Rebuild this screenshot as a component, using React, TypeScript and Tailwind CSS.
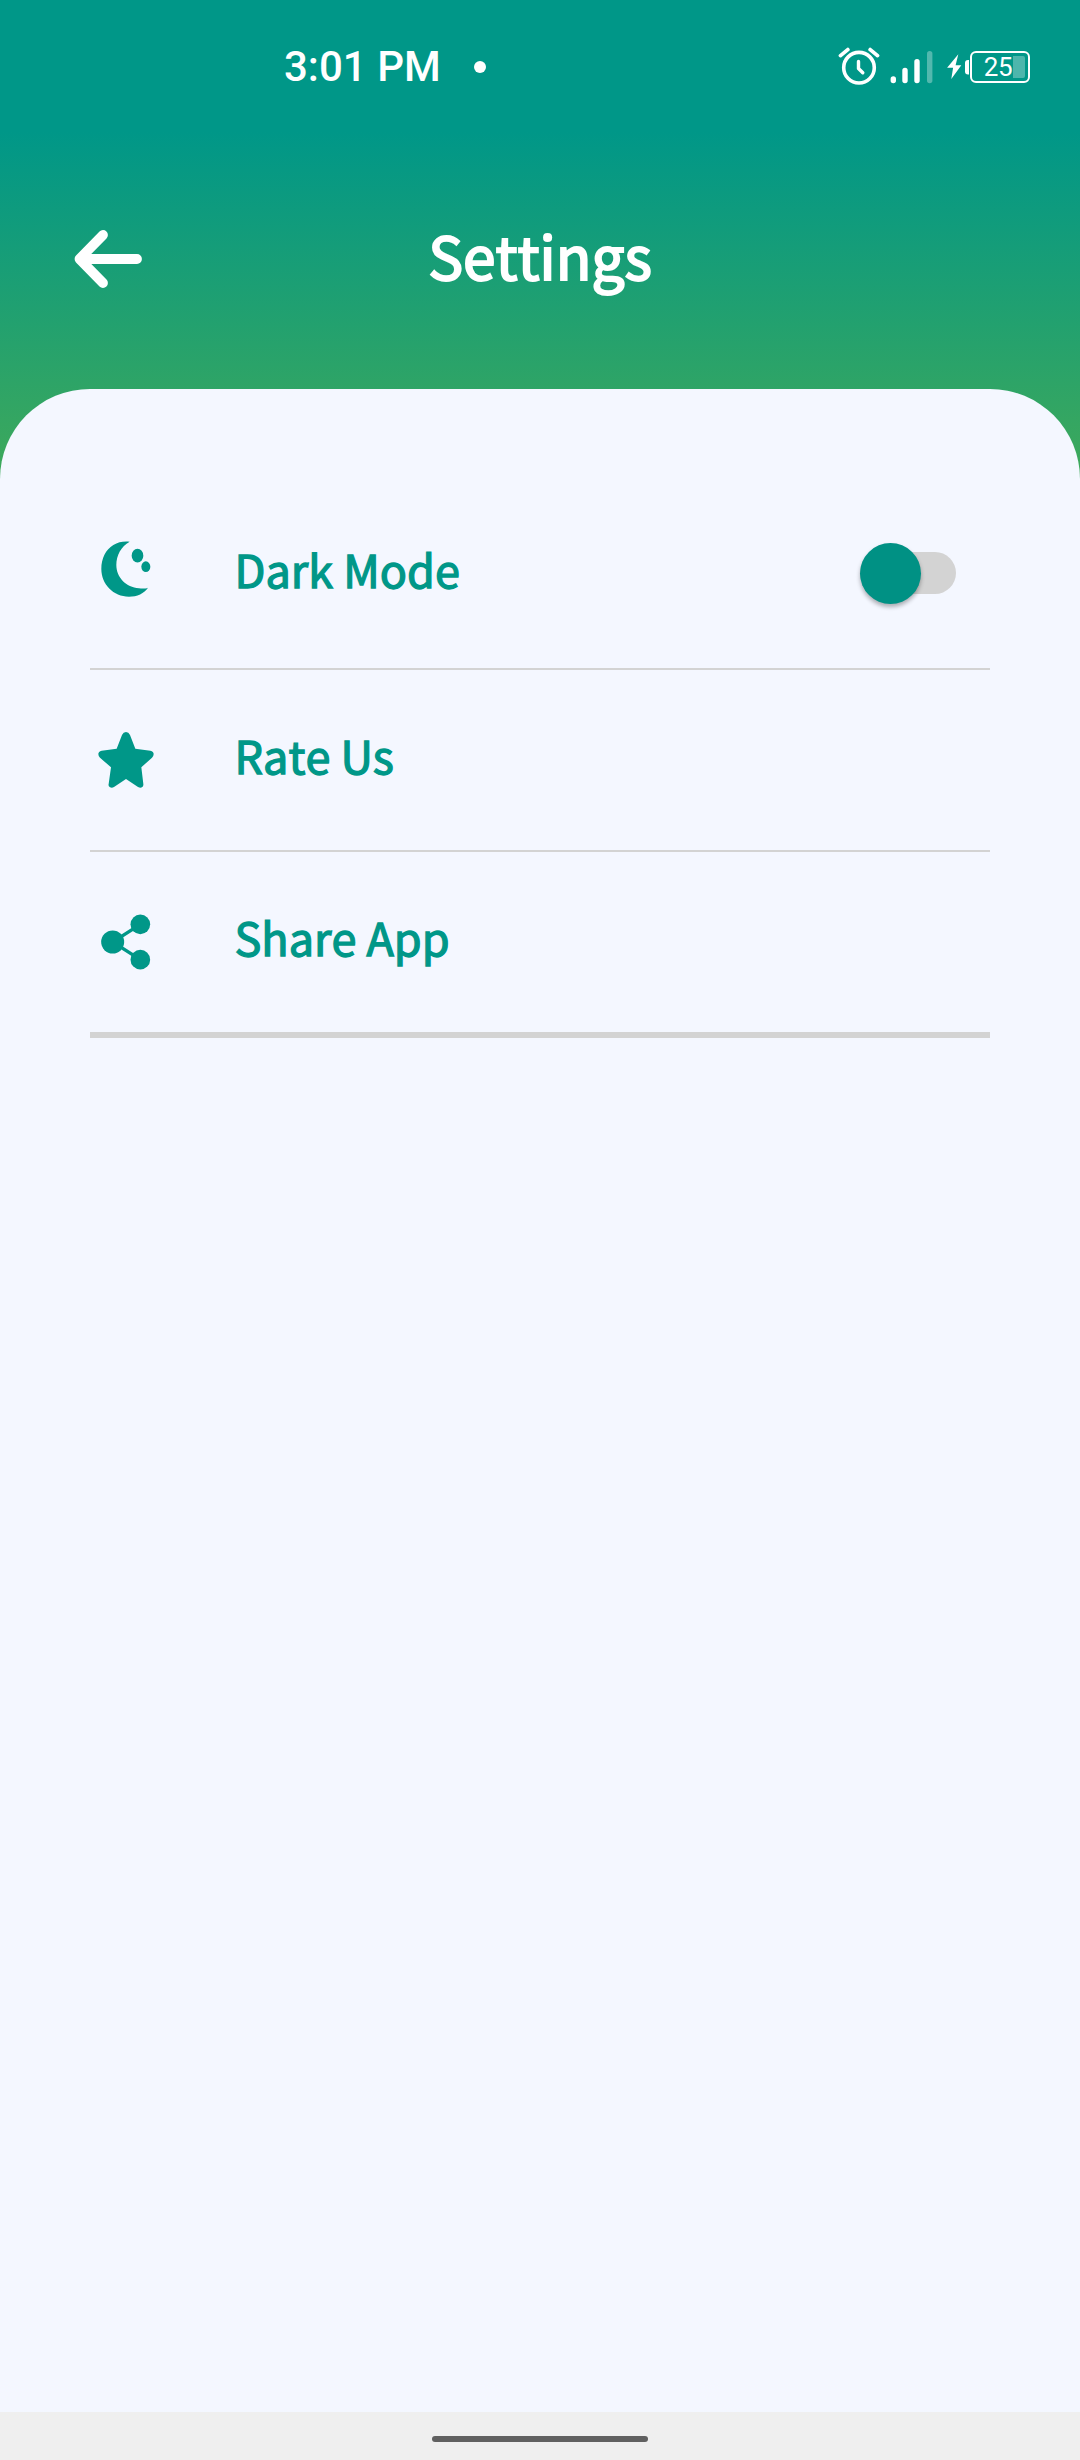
import { useState, type ReactNode } from "react";

function StatusBar() {
  return (
    <div className="flex h-[132px] items-start justify-between pt-[41px] pr-[50px] pl-[284px] font-[Roboto,sans-serif] text-white">
      <div className="flex items-center pt-px">
        <span className="text-[42px] leading-[50px] font-medium">3:01 PM</span>
        <span className="ml-[33px] size-3 rounded-full bg-white" />
      </div>

      <div className="flex h-[52px] items-center">
        {/* Alarm, signal and charging bolt */}
        <svg
          className="h-[52px] w-[132px]"
          viewBox="838 41 132 52"
          fill="none"
          stroke="currentColor"
          strokeLinecap="round"
          strokeLinejoin="round"
        >
          <circle cx="859" cy="67.7" r="15.3" strokeWidth="3.6" />
          <path d="M858.5 61.5v7l4.3 4.3" strokeWidth="3.4" />
          <path d="M840.5 55.6l7.3-6M877.5 55.6l-7.3-6" strokeWidth="3.8" />
          <g strokeWidth="5.4">
            <path d="M893.3 79v1.5M905 70.5v10M917 61.8v18.7" />
            <path d="M929.7 53.8v26.7" opacity="0.32" />
          </g>
          <path
            d="M958.3 54.3l-11.2 13.5h6l-1.8 11.2 10-13.8h-5.7z"
            fill="currentColor"
            stroke="none"
          />
          <path
            d="M969 60h-1a3 3 0 0 0-3 3v8.500a3 3 0 0 0 3 3h1z"
            fill="currentColor"
            stroke="none"
          />
        </svg>
        {/* Battery */}
        <div className="flex h-8 w-[60px] items-center justify-end rounded-[6px] border-2 border-white pr-[3px]">
          <span className="mr-px text-[26px] leading-8 tracking-[-0.5px]">25</span>
          <span className="h-[22px] w-3 rounded-r-[2px] bg-white/30" />
        </div>
      </div>
    </div>
  );
}

function BackArrow() {
  return (
    <svg
      className="h-[58px] w-[68px]"
      viewBox="0 0 68 58"
      fill="none"
      stroke="white"
      strokeWidth="9.800"
      strokeLinecap="round"
      strokeLinejoin="round"
    >
      <path d="M63 29H6M29 5L5.500 29L29 53" />
    </svg>
  );
}

function MoonIcon() {
  return (
    <svg className="h-14 w-[50px]" viewBox="64 63 150 168" fill="currentColor">
      <path d="M150 65C132 63 116 66 101 75C78 89 65 115 65 147C65 193 101 230 148 230C172 230 194 220 205 203C198 206 188 206 178 205C139 202 110 172 110 135C110 105 124 80 150 65Z" />
      <ellipse cx="173.500" cy="107" rx="17.500" ry="20.500" />
      <ellipse cx="198.500" cy="140" rx="13.500" ry="16" />
    </svg>
  );
}

function StarIcon() {
  return (
    <svg className="h-14 w-14" viewBox="54 66 168 168" fill="currentColor">
      <path d="M126 75Q130 66 138 66T150 75L166 116L211 122Q221 124 221 132Q221 138 216 143L184 172L190 222Q191 229 186 232T174 231L138 207L102 231Q96 235 90 232T86 222L93 172L60 143Q55 138 55 132Q55 124 65 122L110 116Z" />
    </svg>
  );
}

function ShareIcon() {
  return (
    <svg className="h-14 w-[50px]" viewBox="64 72 150 168" fill="currentColor">
      <path d="M182 103L99 156L182 209" fill="none" stroke="currentColor" strokeWidth="10" />
      <circle cx="99" cy="156" r="34.500" />
      <circle cx="182" cy="103" r="29.500" />
      <circle cx="182" cy="209" r="29.500" />
    </svg>
  );
}

interface SettingRowProps {
  icon: ReactNode;
  label: string;
  className: string;
  children?: ReactNode;
}

function SettingRow({ icon, label, className, children }: SettingRowProps) {
  return (
    <div className={`flex items-center border-[#d3d3d3] text-[#009788] ${className}`}>
      <div className="flex w-[72px] justify-center">{icon}</div>
      <span className="-mt-2.5 ml-[72.5px] flex-1 text-[45px] leading-[70px] [font-kerning:none] [-webkit-text-stroke:1.300px_currentColor]">
        {label}
      </span>
      {children}
    </div>
  );
}

function Toggle() {
  const [on, setOn] = useState(false);

  return (
    <button
      type="button"
      role="switch"
      aria-checked={on}
      aria-label="Dark Mode"
      onClick={() => setOn(!on)}
      className={`-mt-[2px] mr-[34px] flex h-[42px] w-[96px] items-center rounded-full bg-[#d3d3d3] ${
        on ? "justify-end" : "justify-start"
      }`}
    >
      <span className="mt-px size-[61px] shrink-0 rounded-full bg-[#009184] shadow-[0_3px_4px_rgba(0,0,0,0.3)]" />
    </button>
  );
}

export default function App() {
  return (
    <div className="flex h-[2460px] w-[1080px] flex-col bg-[#f4f7ff] font-['Noto_Sans_CJK_SC',sans-serif]">
      <div className="flex flex-1 flex-col bg-[linear-gradient(to_bottom,#009788_0px,#009788_132px,#3fa95a_480px)]">
        <StatusBar />

        <header className="grid h-[257px] grid-cols-[1fr_auto_1fr] items-start px-[74px] pt-[74px]">
          <div className="pt-6">
            <BackArrow />
          </div>
          <h1 className="pt-px text-[58.5px] leading-[96px] font-normal text-white [font-kerning:none] [font-variant-ligatures:none] [-webkit-text-stroke:2px_currentColor]">
            Settings
          </h1>
        </header>

        <main className="flex-1 rounded-t-[90px] bg-[#f4f7ff] px-[90px] pt-[91px]">
          <SettingRow
            icon={<div className="-mt-[10px]"><MoonIcon /></div>}
            label="Dark Mode"
            className="h-[190px] border-b-2"
          >
            <Toggle />
          </SettingRow>
          <SettingRow icon={<StarIcon />} label="Rate Us" className="h-[182px] border-b-2" />
          <SettingRow icon={<ShareIcon />} label="Share App" className="h-[186px] border-b-6" />
        </main>
      </div>

      <div className="flex h-12 items-center justify-center bg-[#efefef]">
        <div className="mt-[6px] h-[6px] w-[216px] rounded-full bg-[#606060]" />
      </div>
    </div>
  );
}
